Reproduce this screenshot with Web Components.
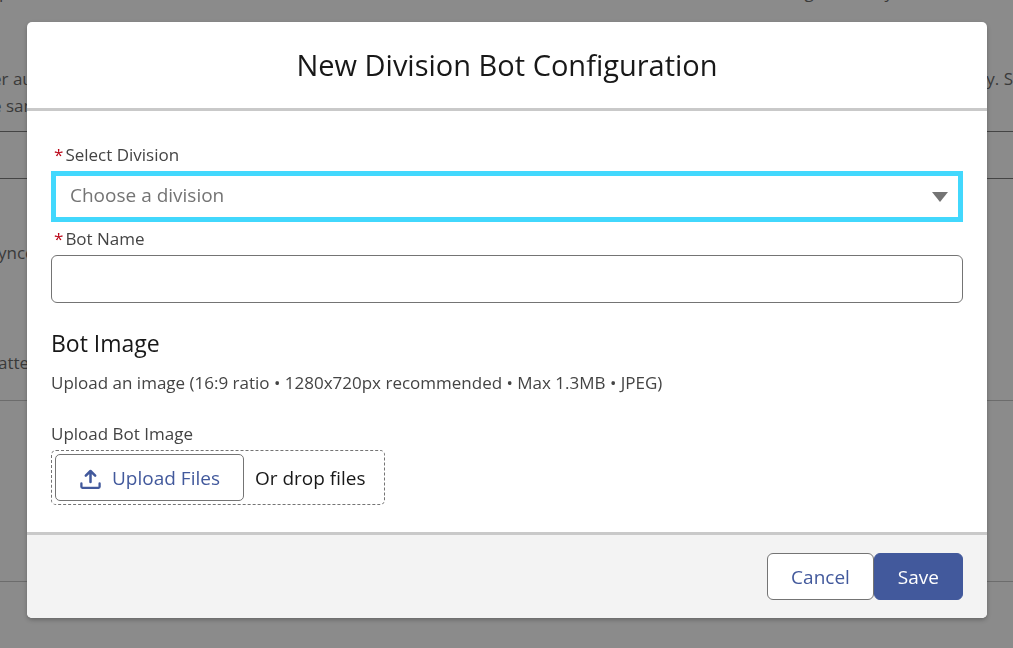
<!DOCTYPE html>
<html lang="en">
<head>
<meta charset="utf-8">
<meta name="viewport" content="width=device-width, initial-scale=1">
<title>New Division Bot Configuration</title>
<style>
    body {
        margin: 0;
        min-height: 100vh;
        overflow: hidden;
        background: #8b8b8b;
        color: #181818;
        font-family: "Open Sans", "Noto Sans", sans-serif;
    }
</style>
</head>
<body>
<setup-page></setup-page>
<modal-dialog heading="New Division Bot Configuration">
    <form-field label="Select Division" type="select" placeholder="Choose a division"></form-field>
    <form-field label="Bot Name" type="text"></form-field>
    <image-upload heading="Bot Image" label="Upload Bot Image">Upload an image (16:9 ratio • 1280x720px recommended • Max 1.3MB • JPEG)</image-upload>
    <action-button slot="footer">Cancel</action-button>
    <action-button slot="footer" variant="brand">Save</action-button>
</modal-dialog>

<script>
// Dimmed page that sits behind the dialog
class SetupPage extends HTMLElement {
    constructor() {
        super();
        this.attachShadow({ mode: 'open' });
        this.shadowRoot.innerHTML = `
            <style>
                :host {
                    display: block;
                    height: 100vh;
                    overflow: hidden;
                    background: #8b8b8b;
                    color: #3a3a3a;
                    font-size: 17px;
                    line-height: 27px;
                    white-space: nowrap;
                }
                .row { display: flex; justify-content: space-between; }
                .row, .line { margin-left: -8px; }
                .intro { margin-top: -22px; padding: 0 120px 0 7px; height: 87px; }
                .box { margin-top: 12px; height: 46px; border: solid #444; border-width: 1px 0; }
                .sync, .pattern { margin-left: -2px; }
                .sync { margin-top: 60px; }
                .pattern { margin-top: 83px; }
                .section { margin-top: 24px; height: 180px; border: solid #6c6c6c; border-width: 1px 0; }
            </style>
            <div class="row intro"><span>p</span><span>g &nbsp; &nbsp; &nbsp; &nbsp; &nbsp; &nbsp; &nbsp; &nbsp;y</span></div>
            <div class="row"><span>er au</span><span>y. S</span></div>
            <div class="line">e sam</div>
            <div class="box"></div>
            <div class="line sync">ynce</div>
            <div class="line pattern">atte</div>
            <div class="section"></div>
        `;
    }
}

class ModalDialog extends HTMLElement {
    constructor() {
        super();
        this.attachShadow({ mode: 'open' });
        this.shadowRoot.innerHTML = `
            <style>
                :host {
                    display: block;
                    position: fixed;
                    inset: 0;
                    padding: 22px 26px 22px 27px;
                    overflow: auto;
                }
                .modal {
                    border-radius: 5px;
                    background: white;
                    box-shadow: 0 2px 4px rgba(0, 0, 0, 0.25);
                }
                header {
                    padding: 22px 24px;
                    border-bottom: 3px solid #c9c9c9;
                    text-align: center;
                }
                h1 { margin: 0; font-size: 29px; font-weight: 400; line-height: 42px; }
                .body { padding: 32px 24px 27px; }
                footer {
                    display: flex;
                    justify-content: flex-end;
                    padding: 18px 24px;
                    border-top: 3px solid #c9c9c9;
                    border-radius: 0 0 5px 5px;
                    background: #f3f3f3;
                }
            </style>
            <section class="modal" role="dialog" aria-modal="true" aria-labelledby="title">
                <header><h1 id="title"></h1></header>
                <div class="body"><slot></slot></div>
                <footer><slot name="footer"></slot></footer>
            </section>
        `;
    }

    connectedCallback() {
        this.shadowRoot.getElementById('title').textContent = this.getAttribute('heading');
    }
}

class FormField extends HTMLElement {
    constructor() {
        super();
        this.attachShadow({ mode: 'open' });
    }

    connectedCallback() {
        const isSelect = this.getAttribute('type') === 'select';
        const control = isSelect
            ? `<select id="control" required><option value="">${this.getAttribute('placeholder')}</option></select>
               <svg width="16" height="10" viewBox="0 0 16 10" aria-hidden="true"><path d="M0 0h16L8 10z" fill="#747474"/></svg>`
            : '<input id="control" type="text" required>';

        this.shadowRoot.innerHTML = `
            <style>
                :host { display: block; }
                label {
                    display: flex;
                    gap: 2px;
                    padding-left: 3px;
                    color: #444;
                    font-size: 17px;
                    line-height: 24px;
                }
                .required { color: #ba0517; }
                .control { display: grid; align-items: center; }
                .control > * { grid-area: 1 / 1; }
                select, input {
                    box-sizing: border-box;
                    width: 100%;
                    font: inherit;
                    font-size: 19px;
                    outline: none;
                }
                select {
                    height: 51px;
                    margin: 4px 0 5px;
                    padding: 0 40px 4px 14px;
                    border: 5px solid #42d8fd;
                    border-radius: 0;
                    background: white;
                    color: #747474;
                    appearance: none;
                }
                input {
                    height: 48px;
                    margin-top: 4px;
                    padding: 0 16px;
                    border: 1px solid #747474;
                    border-radius: 6px;
                }
                svg { justify-self: end; margin-right: 15px; pointer-events: none; }
            </style>
            <label for="control"><span class="required">*</span>${this.getAttribute('label')}</label>
            <div class="control">${control}</div>
        `;
    }
}

class ImageUpload extends HTMLElement {
    constructor() {
        super();
        this.attachShadow({ mode: 'open' });
    }

    connectedCallback() {
        this.shadowRoot.innerHTML = `
            <style>
                :host { display: block; margin-top: 23px; color: #444; font-size: 17px; line-height: 24px; }
                h2 { margin: 0; color: #181818; font-size: 23px; font-weight: 400; line-height: 34px; }
                p { margin: 11px 0 27px; }
                .label { display: block; }
                .dropzone {
                    display: flex;
                    align-items: center;
                    gap: 11px;
                    box-sizing: border-box;
                    width: fit-content;
                    margin-top: 4px;
                    padding: 3px 18px 3px 3px;
                    border: 1px dashed #747474;
                    border-radius: 5px;
                    color: #181818;
                    font-size: 19px;
                }
                button {
                    display: flex;
                    align-items: center;
                    gap: 11px;
                    height: 47px;
                    padding: 0 23px;
                    border: 1px solid #747474;
                    border-radius: 5px;
                    background: white;
                    color: #42599c;
                    font: inherit;
                }
            </style>
            <h2>${this.getAttribute('heading')}</h2>
            <p><slot></slot></p>
            <span class="label" id="label">${this.getAttribute('label')}</span>
            <div class="dropzone" role="group" aria-labelledby="label">
                <button type="button">
                    <svg width="22" height="24" viewBox="0 0 22 24" fill="none" stroke="currentColor" stroke-linecap="round" stroke-linejoin="round" aria-hidden="true">
                        <path d="M11.5 16V6M6.8 9.7l4.7-4.7 4.7 4.7" stroke-width="2.5"/>
                        <path d="M2.4 17.5v3.3q0 1 1 1h16.2q1 0 1-1v-3.3" stroke-width="2.3"/>
                    </svg>
                    Upload Files
                </button>
                <span>Or drop files</span>
            </div>
        `;
    }
}

class ActionButton extends HTMLElement {
    constructor() {
        super();
        this.attachShadow({ mode: 'open' });
        this.shadowRoot.innerHTML = `
            <style>
                :host { display: block; }
                button {
                    height: 47px;
                    padding: 0 23px;
                    border: 1px solid #747474;
                    border-radius: 6px;
                    background: white;
                    color: #42599c;
                    font: inherit;
                    font-size: 19px;
                }
                :host([variant="brand"]) button {
                    border-color: #42599c;
                    background: #42599c;
                    color: white;
                }
            </style>
            <button type="button"><slot></slot></button>
        `;
    }
}

customElements.define('setup-page', SetupPage);
customElements.define('modal-dialog', ModalDialog);
customElements.define('form-field', FormField);
customElements.define('image-upload', ImageUpload);
customElements.define('action-button', ActionButton);
</script>
</body>
</html>
